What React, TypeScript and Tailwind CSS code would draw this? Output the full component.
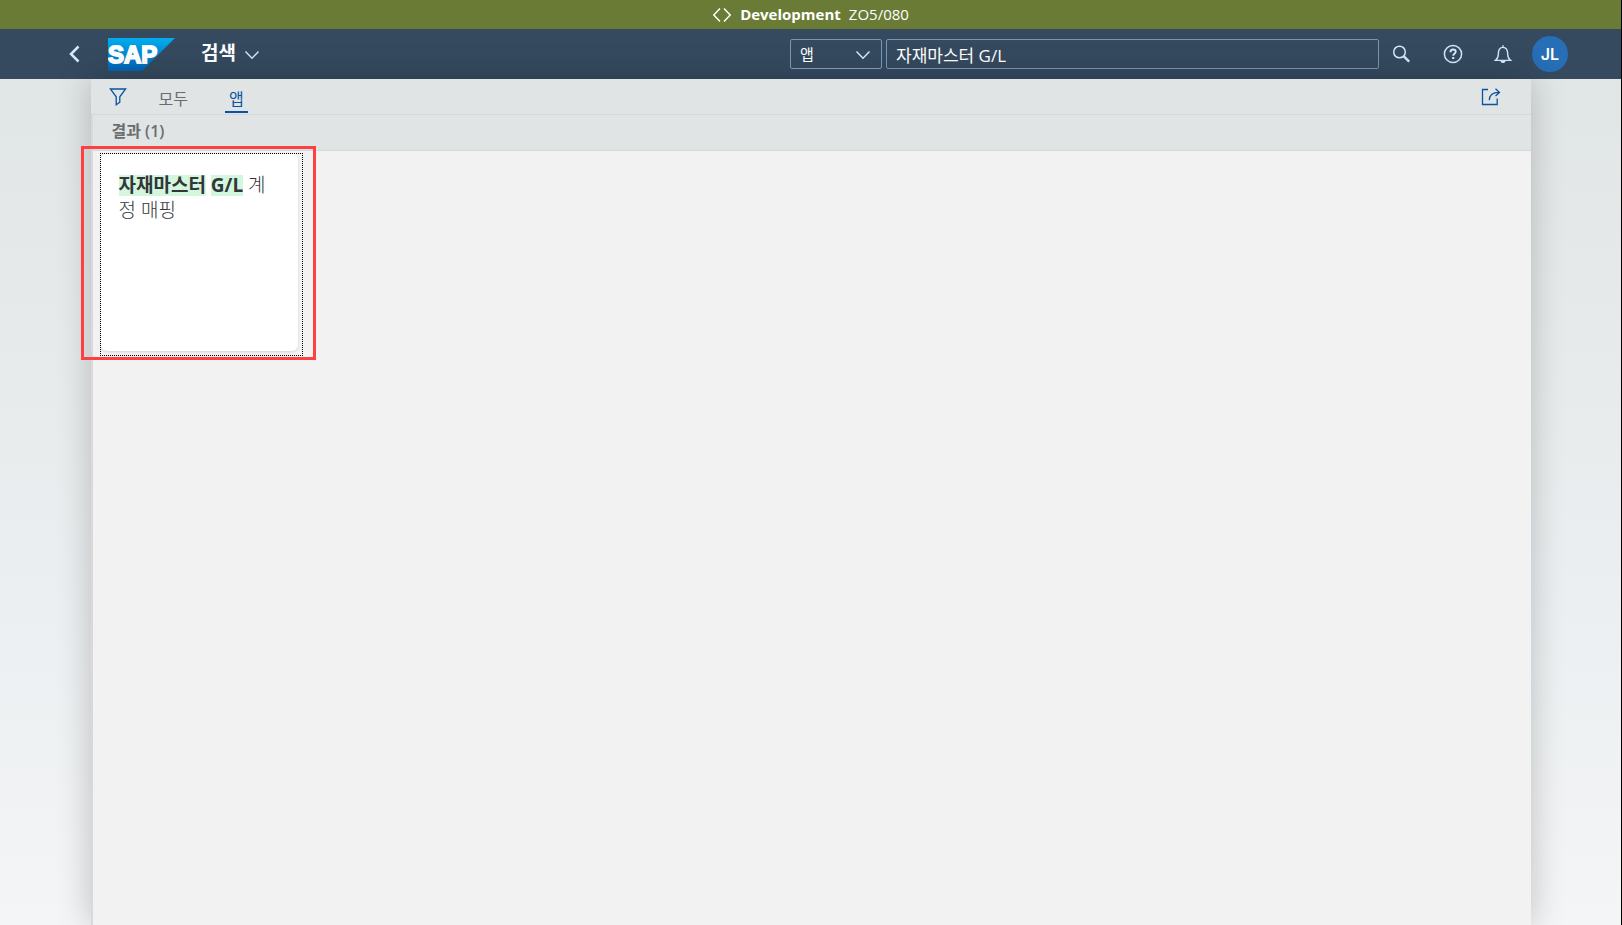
import { useState } from "react";

const TABS = ["모두", "앱"];

const ICON = {
  viewBox: "0 0 20 20",
  fill: "none",
  stroke: "currentColor",
  "aria-hidden": true,
};

function ChevronDown({ className = "" }: { className?: string }) {
  return (
    <svg className={className} width="16" height="10" viewBox="0 0 16 10" fill="none" stroke="currentColor" strokeWidth="1.4" aria-hidden="true">
      <path d="M1.5 1.5 8 8.2l6.5-6.7" />
    </svg>
  );
}

function SapLogo() {
  return (
    <svg width="67" height="33" viewBox="0 0 67 33" role="img" aria-label="SAP">
      <defs>
        <linearGradient id="sap" x1="0" y1="0" x2="0" y2="1">
          <stop offset="0" stopColor="#00aeef" />
          <stop offset="1" stopColor="#0561b4" />
        </linearGradient>
      </defs>
      <path d="M0 0h67L34 33H0z" fill="url(#sap)" />
      <text x="0" y="25" fill="#fff" className="font-['Liberation_Sans',sans-serif] text-[24px] font-bold" stroke="#fff" strokeWidth="1.8">
        SAP
      </text>
    </svg>
  );
}

function SystemBar() {
  return (
    <div className="flex h-[29px] items-center justify-center bg-[#6a7b35] text-[15px] text-white">
      <svg className="mr-2" width="20" height="16" viewBox="0 0 20 16" fill="none" stroke="currentColor" strokeWidth="1.5" aria-hidden="true">
        <path d="M8 1.5 1.8 8 8 14.5M12 1.5 18.2 8 12 14.5" />
      </svg>
      <span className="mr-2 font-bold">Development</span>
      <span>ZO5/080</span>
    </div>
  );
}

function ShellHeader() {
  const [query, setQuery] = useState("자재마스터 G/L");

  return (
    <header className="flex h-[50px] items-center bg-[#354a5f] pr-[53px] pl-16 text-white">
      <button aria-label="뒤로" className="flex w-5 justify-center text-[#d1e8ff]">
        <svg width="12" height="18" viewBox="0 0 12 18" fill="none" stroke="currentColor" strokeWidth="2.5" aria-hidden="true">
          <path d="M10.5 1.5 3 9l7.5 7.5" />
        </svg>
      </button>
      <a href="#" className="ml-6">
        <SapLogo />
      </a>
      <button className="ml-[26px] flex items-center gap-2 pb-0.5 text-[19px] font-bold">
        검색
        <ChevronDown className="mt-1 text-[#d1e8ff]" />
      </button>

      <div className="ml-auto flex items-center gap-1">
        <div className="relative">
          <select aria-label="검색 범위" className="h-[30px] w-[92px] appearance-none rounded-xs border border-[#7996b4] bg-transparent px-[9px] text-[15px] outline-none">
            <option>앱</option>
          </select>
          <ChevronDown className="pointer-events-none absolute top-[11px] right-[11px] text-[#d1e8ff]" />
        </div>
        <input
          aria-label="검색"
          value={query}
          onChange={(e) => setQuery(e.target.value)}
          className="h-[30px] w-[493px] rounded-xs border border-[#7996b4] bg-transparent px-[9px] text-[17px] outline-none"
        />
      </div>

      <div className="ml-3 flex items-center text-[#d1e8ff]">
        <button aria-label="검색 실행">
          <svg {...ICON} width="20" height="20">
            <circle cx="8.5" cy="8" r="5.8" strokeWidth="1.5" />
            <path d="m12.8 12.3 5.4 5.4" strokeWidth="2.4" />
          </svg>
        </button>
        <button aria-label="도움말" className="ml-8">
          <svg {...ICON} width="20" height="20" strokeWidth="1.5">
            <circle cx="10" cy="10" r="8.6" />
            <path d="M7.4 8.2c0-1.7 1.1-2.7 2.7-2.7s2.6.9 2.6 2.3c0 1.9-2.5 2-2.5 4" strokeWidth="1.9" />
            <path d="M10.2 13v2" strokeWidth="2.2" />
          </svg>
        </button>
        <button aria-label="알림" className="ml-[30px]">
          <svg {...ICON} width="20" height="20" strokeWidth="1.4">
            <path d="M2.5 16.4c2-1.6 2.8-3.2 2.8-6.2 0-4.4 1.5-6.8 4.7-6.8s4.7 2.4 4.7 6.8c0 3 .8 4.6 2.8 6.2zM10 3.4V1.2" />
            <path d="M7.4 17h5.2c-.4 1.5-1.3 2.1-2.6 2.1s-2.2-.6-2.6-2.1z" fill="currentColor" stroke="none" />
          </svg>
        </button>
        <button aria-label="프로필" className="ml-[19px] size-9 rounded-full bg-[#266eb5] font-['Inter',sans-serif] text-base font-semibold text-white">
          JL
        </button>
      </div>
    </header>
  );
}

function FilterBar() {
  const [active, setActive] = useState("앱");

  return (
    <div className="flex h-9 items-center border-b border-[#d5d7d8] pr-[30px] pl-[17px] text-[#0854a0]">
      <button aria-label="필터">
        <svg {...ICON} width="20" height="20" strokeWidth="1.3">
          <path d="M2.4 2h15.2l-5.8 7.8v5.4l-3.6 2.6V9.8z" />
        </svg>
      </button>
      <div role="tablist" className="ml-[27px] flex gap-[33px] self-stretch pb-px">
        {TABS.map((tab) => (
          <button
            key={tab}
            role="tab"
            aria-selected={tab === active}
            onClick={() => setActive(tab)}
            className={
              tab === active
                ? "border-b-2 border-[#0854a0] px-1 pt-2 text-base"
                : "border-b-2 border-transparent px-1 pt-2 text-base text-[#6a6d70]"
            }
          >
            {tab}
          </button>
        ))}
      </div>
      <button aria-label="공유" className="ml-auto">
        <svg {...ICON} width="20" height="20" strokeWidth="1.3">
          <path d="M7 2.5H1.5v15h14.7v-6" />
          <path d="M8.3 13.2c0-4.8 3-7.8 9.5-7.8M14.5 1.8l4 3.6-4 3.6" />
        </svg>
      </button>
    </div>
  );
}

function ResultTile() {
  return (
    <div className="relative m-[7px] mt-[2px] size-[203px] border border-dotted border-black">
      <a href="#" className="block size-[197px] rounded-md bg-white px-[18px] pt-[19px] text-[19px]/[25px] font-light break-all text-[#32363a] shadow">
        <mark className="inline-block bg-[#d3f7dc] leading-[21px] font-bold text-inherit">자재마스터</mark>{" "}
        <mark className="inline-block bg-[#d3f7dc] leading-[21px] font-bold text-inherit">G/L</mark> 계정 매핑
      </a>
      <div className="pointer-events-none absolute -top-2 -right-[14px] -bottom-[5px] -left-5 border-3 border-[#ff4040]" />
    </div>
  );
}

export default function App() {
  return (
    <div className="flex min-h-screen flex-col border-r border-black bg-linear-to-b from-[#dfe4e5] to-[#f3f5f7] font-['Open_Sans','Noto_Sans_CJK_KR',sans-serif]">
      <SystemBar />
      <ShellHeader />
      <main className="mx-auto flex w-full max-w-[1440px] grow flex-col bg-[#e0e4e5] shadow-[0_0_32px_rgba(0,0,0,0.22)]">
        <FilterBar />
        <div className="flex grow flex-col border-l-2 border-[#d9d9d9]">
          <h1 className="flex h-9 items-center border-b border-[#d5d7d8] px-[19px] pb-[3px] text-base font-semibold text-[#6a6d70]">
            결과 (1)
          </h1>
          <section className="grow bg-[#f2f2f2]">
            <ResultTile />
          </section>
        </div>
      </main>
    </div>
  );
}
